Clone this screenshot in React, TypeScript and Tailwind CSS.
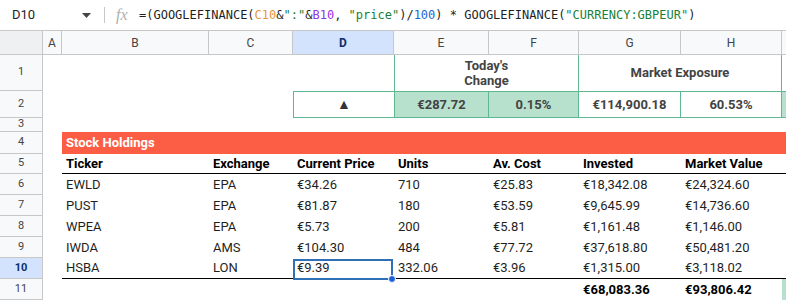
import React from 'react';

const COLS = ['w-[19px]', 'w-[147px]', 'w-[84px]', 'w-[101px]', 'w-[95px]', 'w-[90px]', 'w-[102px]', 'w-[101px]'];
const LETTERS = ['A', 'B', 'C', 'D', 'E', 'F', 'G', 'H'];

const HEADERS = ['Ticker', 'Exchange', 'Current Price', 'Units', 'Av. Cost', 'Invested', 'Market Value'];

const HOLDINGS = [
  ['EWLD', 'EPA', '€34.26', '710', '€25.83', '€18,342.08', '€24,324.60'],
  ['PUST', 'EPA', '€81.87', '180', '€53.59', '€9,645.99', '€14,736.60'],
  ['WPEA', 'EPA', '€5.73', '200', '€5.81', '€1,161.48', '€1,146.00'],
  ['IWDA', 'AMS', '€104.30', '484', '€77.72', '€37,618.80', '€50,481.20'],
  ['HSBA', 'LON', '€9.39', '332.06', '€3.96', '€1,315.00', '€3,118.02'],
];

const RowHead = ({ n, active = false }: { n: number; active?: boolean }) => (
  <div
    className={`w-[43px] shrink-0 flex items-center justify-center border-r border-b border-[#c7c7c7] text-[11px] ${
      active ? 'bg-[#d3e3fd] font-bold text-[#0b2e6b]' : 'bg-[#f8f9fa] text-[#444]'
    }`}
  >
    {n}
  </div>
);

const Row = ({ h, children }: { h: string; children: React.ReactNode }) => (
  <div className={`flex ${h}`}>{children}</div>
);

const Selection = () => (
  <div className="absolute left-0 top-[1px] w-[100px] h-[21px] border-2 border-[#2f6fb5] z-10 pointer-events-none">
    <div className="absolute -right-[5px] -bottom-[5px] w-[8px] h-[8px] rounded-full bg-[#1a62d6] border border-white" />
  </div>
);

export default function App() {
  return (
    <div className="w-[786px] h-[300px] overflow-hidden bg-white font-[Roboto,'Liberation_Sans',sans-serif] text-[13px] text-[#1f1f1f]">
      {/* formula bar */}
      <div className="flex items-center h-[31px] border-b border-[#c7c7c7]">
        <div className="w-[104px] shrink-0 flex items-center justify-between pl-[12px] pr-[13px]">
          <span className="text-[13px] text-[#1f1f1f]">D10</span>
          <svg width="9" height="5" viewBox="0 0 9 5">
            <path d="M0 0h9L4.5 5z" fill="#444" />
          </svg>
        </div>
        <div className="w-px h-[16px] bg-[#c7c7c7]" />
        <span className="ml-[11px] w-[22px] font-['Liberation_Serif',serif] italic text-[16px] text-[#b0b0b0]">fx</span>
        <span className="ml-[1px] font-['DejaVu_Sans_Mono',monospace] text-[12px] whitespace-nowrap text-[#1f1f1f]">
          =(GOOGLEFINANCE(<span className="text-[#e8963a]">C10</span>&amp;
          <span className="text-[#188038]">":"</span>&amp;<span className="text-[#9334e6]">B10</span>,{' '}
          <span className="text-[#188038]">"price"</span>)/<span className="text-[#1967d2]">100</span>) * GOOGLEFINANCE(
          <span className="text-[#188038]">"CURRENCY:GBPEUR"</span>)
        </span>
      </div>

      {/* column headers */}
      <div className="flex h-[24px] border-b border-[#c7c7c7] text-[12px] text-[#444]">
        <div className="w-[43px] shrink-0 bg-[#eef0f1] border-r border-[#c7c7c7]" />
        {LETTERS.map((l, i) => (
          <div
            key={l}
            className={`${COLS[i]} shrink-0 flex items-center justify-center border-r border-[#c7c7c7] ${
              l === 'D' ? 'bg-[#d3e3fd] font-bold text-[#0b2e6b]' : 'bg-[#f8f9fa]'
            }`}
          >
            {l}
          </div>
        ))}
        <div className="flex-1 bg-[#f8f9fa]" />
      </div>

      {/* row 1 */}
      <Row h="h-[36px]">
        <RowHead n={1} />
        <div className="w-[351px] shrink-0" />
        <div className="w-[185px] shrink-0 flex items-center justify-center text-center leading-[15px] font-bold text-[#434343] border-x border-[#5fb892]">
          Today's
          <br />
          Change
        </div>
        <div className="w-[203px] shrink-0 flex items-center justify-center font-bold text-[#434343] border-r border-[#5fb892]">
          Market Exposure
        </div>
        <div className="flex-1" />
      </Row>

      {/* row 2 */}
      <Row h="h-[27px]">
        <RowHead n={2} />
        <div className="w-[250px] shrink-0" />
        <div className="w-[101px] shrink-0 flex items-center justify-center border-l border-y border-[#5fb892] text-[14px] text-[#333]">
          ▲
        </div>
        <div className="w-[95px] shrink-0 flex items-center justify-center bg-[#b7e1cd] border border-[#5fb892] font-bold text-[#434343]">
          €287.72
        </div>
        <div className="w-[90px] shrink-0 flex items-center justify-center bg-[#b7e1cd] border-y border-r border-[#5fb892] font-bold text-[#434343]">
          0.15%
        </div>
        <div className="w-[102px] shrink-0 flex items-center justify-center border-y border-r border-[#5fb892] font-bold text-[#434343]">
          €114,900.18
        </div>
        <div className="w-[101px] shrink-0 flex items-center justify-center border-y border-r border-[#5fb892] font-bold text-[#434343]">
          60.53%
        </div>
        <div className="flex-1 bg-[#b7e1cd] border-y border-[#5fb892]" />
      </Row>

      {/* row 3 */}
      <Row h="h-[14px]">
        <RowHead n={3} />
      </Row>

      {/* row 4 */}
      <Row h="h-[22px]">
        <RowHead n={4} />
        <div className="w-[19px] shrink-0" />
        <div className="flex-1 flex items-center px-[4px] bg-[#fb5d45] font-bold text-white">Stock Holdings</div>
      </Row>

      {/* row 5 */}
      <Row h="h-[20px]">
        <RowHead n={5} />
        <div className="w-[19px] shrink-0" />
        <div className="flex flex-1 border-b border-black">
          {HEADERS.map((t, i) => (
            <div key={t} className={`${COLS[i + 1]} shrink-0 flex items-center px-[4px] font-bold text-black whitespace-nowrap`}>
              {t}
            </div>
          ))}
        </div>
      </Row>

      {/* rows 6–10 */}
      {HOLDINGS.map((r, ri) => {
        const last = ri === HOLDINGS.length - 1;
        return (
          <Row key={r[0]} h="h-[21px]">
            <RowHead n={ri + 6} active={last} />
            <div className="w-[19px] shrink-0" />
            <div className={`flex flex-1 ${last ? 'border-b border-black' : ''}`}>
              {r.map((v, i) => (
                <div
                  key={i}
                  className={`${COLS[i + 1]} shrink-0 flex items-center px-[4px] whitespace-nowrap ${
                    last && i === 2 ? 'relative' : ''
                  }`}
                >
                  {v}
                  {last && i === 2 && <Selection />}
                </div>
              ))}
            </div>
          </Row>
        );
      })}

      {/* row 11 */}
      <Row h="h-[21px]">
        <RowHead n={11} />
        <div className="w-[536px] shrink-0" />
        <div className="w-[102px] shrink-0 flex items-center px-[4px] font-bold text-black">€68,083.36</div>
        <div className="w-[101px] shrink-0 flex items-center px-[4px] font-bold text-black">€93,806.42</div>
        <div className="flex-1 bg-[#b7e1cd]" />
      </Row>
    </div>
  );
}
